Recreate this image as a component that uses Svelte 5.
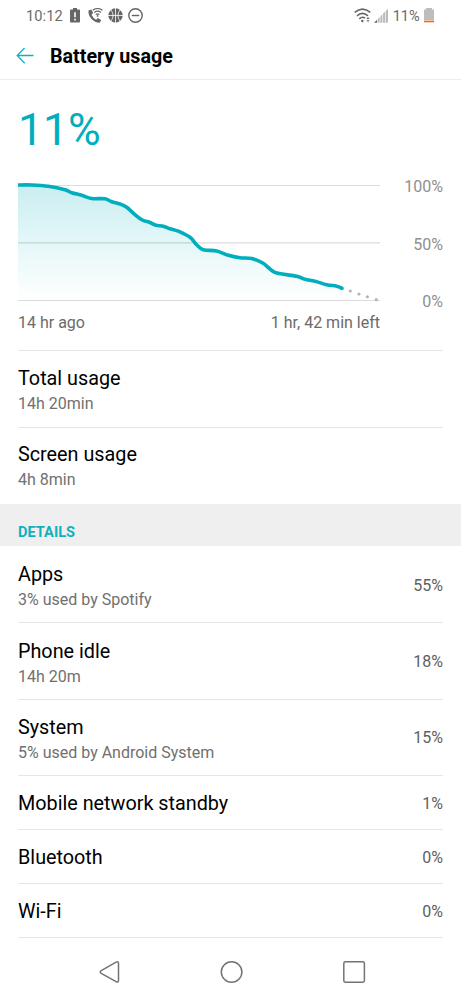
<script lang="ts">
	type Point = [number, number]

	type UsageRow = {
		title: string
		detail?: string
		value?: string
	}

	const totals: UsageRow[] = [
		{ title: 'Total usage', detail: '14h 20min' },
		{ title: 'Screen usage', detail: '4h 8min' },
	]

	const details: UsageRow[] = [
		{ title: 'Apps', detail: '3% used by Spotify', value: '55%' },
		{ title: 'Phone idle', detail: '14h 20m', value: '18%' },
		{ title: 'System', detail: '5% used by Android System', value: '15%' },
		{ title: 'Mobile network standby', value: '1%' },
		{ title: 'Bluetooth', value: '0%' },
		{ title: 'Wi-Fi', value: '0%' },
	]

	const history: Point[] = [
		[0, 5], [13.7, 5], [30.3, 6.3], [47, 9.7], [53.7, 12.7], [63.7, 15.3], [73.7, 18.5], [87, 18.8],
		[93.7, 21.7], [102, 24], [108.7, 27.3], [117, 34.7], [124.3, 40], [132, 42.5], [138, 45.3],
		[145.3, 46.2], [152, 48.7], [160.3, 51.2], [172, 57.3], [178.7, 64.7], [185.3, 69.7], [198.7, 71],
		[210.3, 75.3], [222, 77.7], [233.7, 78.5], [244.7, 83], [252, 89], [258.7, 93], [278.7, 96.3],
		[287, 99.3], [297, 101.2], [308.7, 104.7], [318.7, 106.2], [324, 108.4],
	]

	const forecast: Point[] = [[332.3, 111], [341, 114], [349.4, 116.8], [358.3, 119.7]]

	function smooth(points: Point[]) {
		let path = `M${points[0][0]} ${points[0][1]}`
		for (let i = 0; i < points.length - 1; i++) {
			const a = points[i - 1] ?? points[i]
			const b = points[i]
			const c = points[i + 1]
			const d = points[i + 2] ?? c
			path += ` C${b[0] + (c[0] - a[0]) / 6} ${b[1] + (c[1] - a[1]) / 6} ${c[0] - (d[0] - b[0]) / 6} ${c[1] - (d[1] - b[1]) / 6} ${c[0]} ${c[1]}`
		}
		return path
	}

	const line = smooth(history)
	const area = `${line} V120.5 H0 Z`
</script>

{#snippet usageRow(row: UsageRow)}
	<li class="row" class:single={!row.detail}>
		<div class="copy">
			<span class="title">{row.title}</span>
			{#if row.detail}
				<span class="detail">{row.detail}</span>
			{/if}
		</div>
		{#if row.value}
			<span class="value">{row.value}</span>
		{/if}
	</li>
{/snippet}

<div class="screen">
	<div class="status-bar">
		<span class="clock">10:12</span>
		<svg class="alert" width="10" height="15" viewBox="0 0 10 15">
			<path d="M3 0h4v1.6h2q1 0 1 1V13.6q0 1-1 1H1q-1 0-1-1V2.6q0-1 1-1h2z" fill="#666" />
			<path d="M5 4.3v5M5 10.7v1.7" stroke="#fff" stroke-width="1.6" />
		</svg>
		<svg class="call" width="15" height="15" viewBox="0 0 15 15" fill="none">
			<path d="M.5 2.5 3.3 1.6 5.2 5 3.5 6.700Q5 10 8.100 11.700L9.900 10 13.100 12 12 14.500Q8 15.300 4 11.500 0 7.500.5 2.500Z" fill="#666" />
			<path d="M4.700 2.300Q9.600-1.300 14.500 2.300M6.200 4.500Q9.600 1.800 13 4.500M7.800 6.600Q9.600 5.200 11.400 6.600" stroke="#666" stroke-width="1.100" />
			<circle cx="9.600" cy="7.900" r=".9" fill="#666" />
		</svg>
		<svg class="ball" width="15" height="15" viewBox="0 0 15 15" fill="none">
			<circle cx="7.500" cy="7.500" r="7.200" fill="#666" />
			<path d="M7.500 0v15M0 7.500h15M2.600 1.500q5 6 0 12M12.400 1.500q-5 6 0 12" stroke="#fff" stroke-width=".8" />
		</svg>
		<svg class="dnd" width="15" height="15" viewBox="0 0 15 15" fill="none" stroke="#666" stroke-width="1.400">
			<circle cx="7.500" cy="7.500" r="6.700" />
			<path d="M3.700 7.500h7.600" />
		</svg>
		<svg class="wifi" width="18" height="15" viewBox="0 0 18 15" fill="none" stroke="#666" stroke-width="1.600">
			<path d="M.7 4.400Q8.500-2.200 16.300 4.400M3 7.800Q8.500 3 14 7.800M5.300 10.900Q8.500 8 11 10.200" />
			<circle cx="8.300" cy="13" r="1.200" fill="#666" stroke="none" />
			<path d="m12.300 11 1.700-1.900 1.700 1.900zM12.300 12.200l1.700 1.900 1.700-1.900z" fill="#666" stroke="none" />
		</svg>
		<svg class="signal" width="15" height="15" viewBox="0 0 15 15">
			<path d="M0 14.700 3 11.700V14.700Z" fill="#666" />
			<path d="M3.700 14.700V11L5.700 9V14.700ZM6.400 14.700V8.300L8.400 6.300V14.700ZM9.100 14.700V5.600L11.100 3.600V14.700ZM11.800 14.700V2.900L14 .7V14.700Z" fill="#bbb" />
		</svg>
		<span class="level">11%</span>
		<svg class="battery" width="10" height="15" viewBox="0 0 10 15">
			<path d="M2 0h6v1.600h2V12H0V1.600h2z" fill="#bdbdbd" />
			<path d="M0 12.600h10V14.300H0z" fill="#f4661b" />
		</svg>
	</div>

	<header>
		<svg width="18" height="16" viewBox="0 0 18 16" fill="none" stroke="#10b1bd" stroke-width="1.300">
			<path d="M17.500 7.500H1.200M8.700-.2 1.200 7.500l7.500 7.700" />
		</svg>
		<h1>Battery usage</h1>
	</header>

	<main>
		<section class="summary">
			<div class="percent">11%</div>
			<div class="chart">
				<svg width="362" height="124" viewBox="0 0 362 124" fill="none">
					<defs>
						<linearGradient id="charge" x1="0" y1="5" x2="0" y2="120" gradientUnits="userSpaceOnUse">
							<stop offset="0" stop-color="#00aebd" stop-opacity=".21" />
							<stop offset="1" stop-color="#00aebd" stop-opacity="0" />
						</linearGradient>
					</defs>
					<path d={area} fill="url(#charge)" />
					<path d="M0 5.500h362M0 62.800h362M0 120.500h362" stroke="#000" stroke-opacity=".14" stroke-width="1.200" />
					<path d={line} stroke="#00aebd" stroke-width="3.600" />
					<circle cx="324" cy="108.400" r="1.800" fill="#00aebd" />
					{#each forecast as [x, y]}
						<circle cx={x} cy={y} r="1.600" fill="#a9b8c0" />
					{/each}
				</svg>
				<div class="scale">
					<span>100%</span>
					<span>50%</span>
					<span>0%</span>
				</div>
			</div>
			<div class="range">
				<span>14 hr ago</span>
				<span>1 hr, 42 min left</span>
			</div>
		</section>

		<ul class="totals">
			{#each totals as row (row.title)}
				{@render usageRow(row)}
			{/each}
		</ul>

		<h2>DETAILS</h2>

		<ul class="details">
			{#each details as row (row.title)}
				{@render usageRow(row)}
			{/each}
		</ul>
	</main>

	<nav>
		<svg width="24" height="24" viewBox="0 0 24 24">
			<path d="M20.500 3.600V20.300Q20.500 23 18.100 21.700L3.200 13.300Q1.200 12 3.200 10.700L18.100 2.200Q20.500 1 20.500 3.600Z" />
		</svg>
		<svg width="24" height="24" viewBox="0 0 24 24"><circle cx="11.600" cy="12" r="10.300" /></svg>
		<svg width="24" height="24" viewBox="0 0 24 24"><rect x="1.800" y="1.700" width="20.600" height="20.600" rx="1.700" /></svg>
	</nav>
</div>

<style>
	:global(body) {
		background: #fff;
	}

	.screen {
		display: flex;
		flex-direction: column;
		width: 461px;
		height: 999px;
		overflow: hidden;
		background: #fff;
		color: #000;
		font-family: Roboto, 'Liberation Sans', sans-serif;
		font-size: 16px;
		line-height: 20px;
	}

	.status-bar {
		display: flex;
		align-items: center;
		height: 31px;
		padding: 0 27px 0 26px;
		color: #6b6b6b;
		font-size: 14.6px;
		box-sizing: border-box;
	}

	svg {
		display: block;
		flex-shrink: 0;
	}

	.clock {
		letter-spacing: 0.1px;
	}

	.alert {
		margin-left: 7.5px;
	}

	.call {
		margin-left: 8px;
	}

	.ball {
		margin-left: 5px;
	}

	.dnd {
		margin-left: 5px;
	}

	.wifi {
		margin-left: auto;
	}

	.signal {
		margin: 0 4px 0 2px;
	}

	.level {
		letter-spacing: -0.1px;
	}

	.battery {
		margin-left: 4.5px;
	}

	header {
		display: flex;
		align-items: center;
		gap: 16px;
		height: 49px;
		padding: 1px 0 0 16px;
		border-bottom: 1px solid #ececec;
		box-sizing: border-box;
	}

	h1 {
		margin: 2px 0 0;
		font-size: 19.7px;
		font-weight: 700;
		line-height: 24px;
	}

	.summary {
		height: 270.4px;
		padding: 22px 18px 0;
		box-sizing: border-box;
	}

	.percent {
		height: 77px;
		padding-top: 1px;
		color: #00aebd;
		font-size: 44.6px;
		line-height: 54px;
	}

	.chart {
		display: flex;
		justify-content: space-between;
		height: 124px;
	}

	.scale {
		display: flex;
		flex-direction: column;
		justify-content: space-between;
		height: 135px;
		margin-top: -3px;
		color: #8f8f8f;
		text-align: right;
	}

	.range {
		display: flex;
		justify-content: space-between;
		width: 362px;
		margin-top: 9px;
		color: #6b6b6b;
	}

	ul {
		margin: 0;
		padding: 0 18px;
		list-style: none;
	}

	.totals {
		padding-bottom: 0.8px;
	}

	.details {
		padding-top: 1px;
	}

	.row {
		display: flex;
		align-items: center;
		justify-content: space-between;
		height: 76.4px;
		padding-top: 2px;
		border-bottom: 1px solid #e6e6e6;
		box-sizing: border-box;
	}

	.row.single {
		height: 53.8px;
		padding-top: 3px;
	}

	.totals .row {
		border-top: 1px solid #e6e6e6;
		border-bottom: 0;
	}

	.row:not(.single) .copy {
		padding-top: 3px;
	}

	.totals .row:not(.single) .copy {
		padding-top: 2px;
	}

	.copy {
		display: flex;
		flex-direction: column;
	}

	.title {
		font-size: 19.8px;
		line-height: 26px;
	}

	.detail {
		line-height: 24px;
		color: #707070;
	}

	.value {
		color: #606060;
	}

	h2 {
		height: 42px;
		margin: 0;
		padding: 18px 18px 0;
		background: #efefef;
		color: #10b1bd;
		font-size: 14.6px;
		font-weight: 700;
		line-height: 20px;
		box-sizing: border-box;
	}

	nav {
		display: flex;
		justify-content: space-between;
		padding: 22.5px 95px 0 98px;
	}

	nav svg {
		fill: none;
		stroke: #737373;
		stroke-width: 1.5;
	}
</style>
